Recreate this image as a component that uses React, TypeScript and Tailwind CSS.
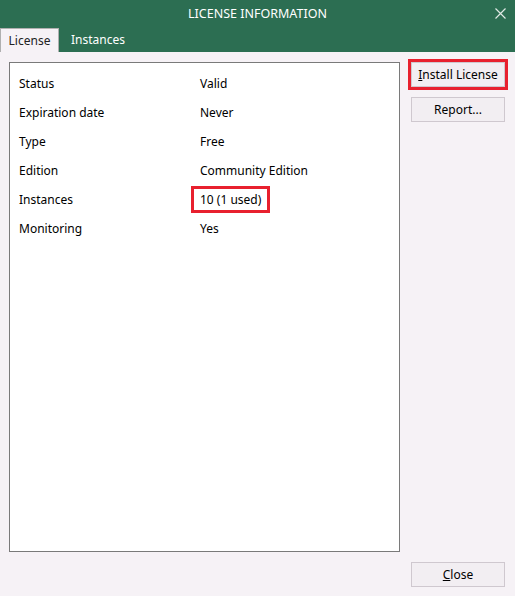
export default function App() {
  const rows: [string, string][] = [
    ["Status", "Valid"],
    ["Expiration date", "Never"],
    ["Type", "Free"],
    ["Edition", "Community Edition"],
    ["Instances", "10 (1 used)"],
    ["Monitoring", "Yes"],
  ];
  return (
    <div className="w-[515px] h-[596px] bg-[#f6f2f6] flex flex-col text-[12px] text-black" style={{ fontFamily: '"Noto Sans", "DejaVu Sans", sans-serif' }}>
      <div className="bg-[#2c6e52] h-[52px] flex flex-col shrink-0">
        <div className="h-[28px] relative flex items-center justify-center text-white text-[12.5px]">
          LICENSE INFORMATION
          <svg className="absolute right-[9px] top-[8px]" width="11" height="11" viewBox="0 0 11 11"><path d="M0.5 0.5L10.5 10.5M10.5 0.5L0.5 10.5" stroke="#dfe9e4" strokeWidth="1.2" /></svg>
        </div>
        <div className="flex h-[24px] items-end">
          <div className="w-[59px] h-[24px] bg-[#f6f2f6] border border-b-0 border-[#b0b0b0] flex items-center justify-center text-[#222]">License</div>
          <div className="px-[12px] h-[24px] flex items-center text-white">Instances</div>
        </div>
      </div>
      <div className="flex flex-1 pl-[9px] pt-[10px] pb-[8px]">
        <div className="w-[391px] h-[490px] bg-white border border-[#7a7a7a] pt-[6px]">
          {rows.map(([k, v]) => (
            <div key={k} className="flex h-[29px] items-center">
              <div className="w-[190px] pl-[9px]">{k}</div>
              {k === "Instances" ? (
                <div className="border-[3px] border-[#e8202e] px-[6px] h-[27px] flex items-center -ml-[9px]">{v}</div>
              ) : (
                <div>{v}</div>
              )}
            </div>
          ))}
        </div>
        <div className="flex flex-col flex-1 pl-[8px] pr-[7px] pt-[-3px]">
          <div className="-mt-[3px] border-[3px] border-[#e8202e] p-0">
            <button className="w-full h-[25px] bg-[#f2eef2] border border-[#cfc8cf] flex items-center justify-center"><span><u>I</u>nstall License</span></button>
          </div>
          <button className="mt-[7px] mx-[3px] h-[25px] bg-[#f2eef2] border border-[#cfc8cf]">Report...</button>
          <div className="flex-1" />
          <button className="mx-[3px] mb-[1px] h-[25px] bg-[#f2eef2] border border-[#cfc8cf]"><u>C</u>lose</button>
        </div>
      </div>
    </div>
  );
}
